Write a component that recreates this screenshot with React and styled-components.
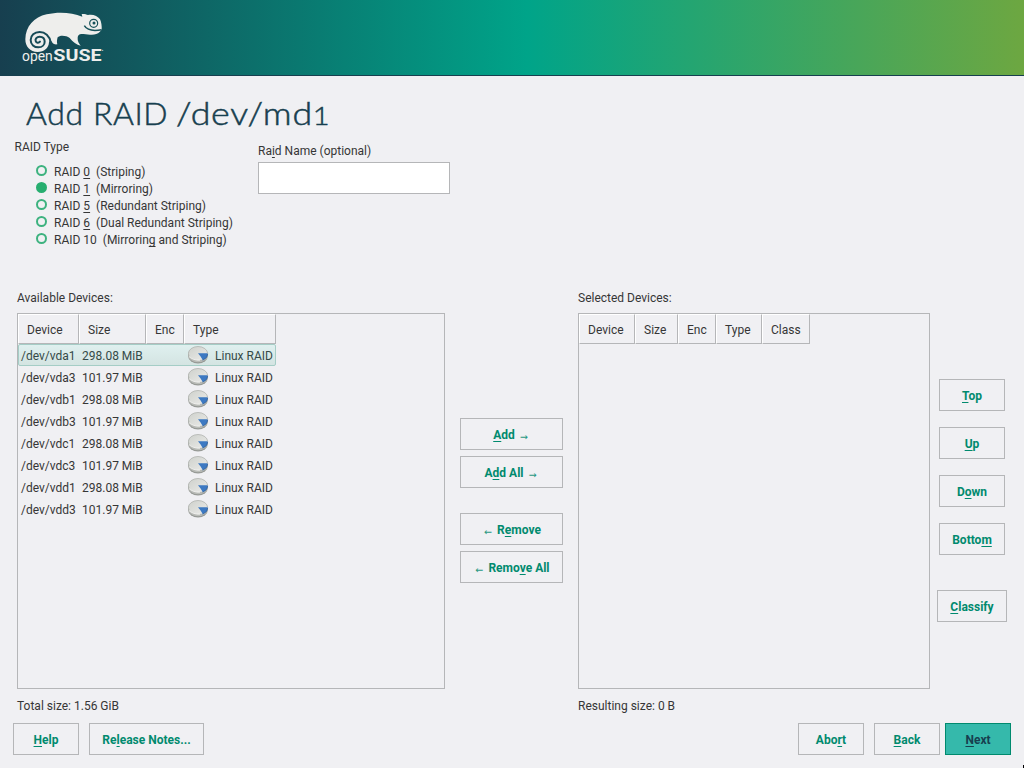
import React from "react";
import styled, { createGlobalStyle, css } from "styled-components";

const GlobalStyle = createGlobalStyle`
  * { box-sizing: border-box; }
  body {
    margin: 0;
    background: #f0f0f3;
    color: #363636;
    font: 12px/16px Roboto, sans-serif;
    overflow: hidden;
  }
  button, input { font: inherit; border-radius: 0; }
`;

const Page = styled.div`
  position: relative;
  display: flex;
  flex-direction: column;
  width: 1024px;
  height: 768px;
  overflow: hidden;
`;

const Banner = styled.header`
  flex: none;
  height: 76px;
  padding: 10px 0 0 20px;
  background: linear-gradient(90deg, #173f4f 0%, #00a489 51.5%, #6da741 100%);
  border-bottom: 1px solid #173f4f;
`;

const Title = styled.h1`
  display: flex;
  gap: 12px;
  flex: none;
  height: 56px;
  margin: 0;
  padding-left: 26px;
  font: 300 31px/74px Lato, sans-serif;
  letter-spacing: 0.6px;
  color: #173f4f;
  -webkit-text-stroke: 0.5px #173f4f;
  white-space: nowrap;
`;

const TitlePart = styled.span`
  transform: scaleX(${(p) => p.$stretch});
  transform-origin: 0 0;
`;

const LowFigure = styled.span`
  font-size: 25px;
`;

const Options = styled.section`
  display: flex;
  flex: none;
  height: 158px;
  padding-left: 14px;
`;

const RaidTypes = styled.div`
  width: 244px;
  padding-top: 7px;
`;

const GroupTitle = styled.div`
  padding-left: 0.5px;
`;

const RadioList = styled.div`
  padding: 9px 0 0 22px;
`;

const RadioRow = styled.label`
  display: flex;
  gap: 7px;
  height: 17px;
  line-height: 17px;
  white-space: pre;
`;

const Dot = styled.span`
  width: 11px;
  height: 11px;
  margin-top: 1px;
  border: 2px solid #3db27f;
  border-radius: 50%;
  background: ${(p) => (p.$on ? "#27ae70" : "transparent")};
  ${(p) => p.$on && css`border-color: #27ae70;`}
`;

const NameField = styled.label`
  display: flex;
  flex-direction: column;
  gap: 3px;
  padding-top: 11px;
`;

const NameInput = styled.input`
  width: 192px;
  height: 32px;
  border: 1px solid #b5b6b8;
  background: #fff;
  outline: none;
`;

const Key = styled.span`
  text-decoration: underline;
  text-decoration-thickness: 1px;
  text-underline-offset: 2px;
  text-decoration-skip-ink: none;
`;

const Selector = styled.section`
  display: flex;
  flex: none;
  height: 425px;
  padding-left: 17px;
`;

const Panel = styled.div`
  display: flex;
  flex-direction: column;
  width: ${(p) => p.$width}px;
`;

const PanelLabel = styled.div`
  height: 23px;
`;

const PanelTotal = styled.div`
  padding-top: 9px;
`;

const Table = styled.div`
  height: 376px;
  border: 1px solid #b5b6b8;
`;

const HeadRow = styled.div`
  display: flex;
  height: 30px;
`;

const HeadCell = styled.div`
  width: ${(p) => p.$width}px;
  padding-left: 8px;
  line-height: 30px;
  border: solid;
  border-width: 1px;
  border-color: #fff #b5b6b8 #b5b6b8 #fff;
`;

const DeviceRow = styled.div`
  display: grid;
  grid-template-columns: 61px 106px 27px 1fr;
  width: 258px;
  height: 22px;
  padding-left: 2px;
  line-height: 22px;
  border: 1px solid transparent;
  white-space: nowrap;
  ${(p) =>
    p.$selected &&
    css`
      color: #354a48;
      border-color: #a5cdc6;
      border-radius: 2px;
      background: linear-gradient(#dff0ef, #d4e4e2);
    `}
`;

const Transfer = styled.div`
  display: flex;
  flex-direction: column;
  gap: 6px;
  width: 133px;
  padding: 128px 15px 0;
`;

const Order = styled.div`
  display: flex;
  flex-direction: column;
  align-items: center;
  gap: 16px;
  width: 84px;
  padding-top: 89px;
`;

const Button = styled.button`
  flex: none;
  width: ${(p) => p.$width}px;
  height: 32px;
  margin-top: ${(p) => p.$gap || 0}px;
  padding: 2px 0 0;
  border: 1px solid ${(p) => (p.$primary ? "#008a6e" : "#b5b6b8")};
  background: ${(p) => (p.$primary ? "#35b9ab" : "transparent")};
  color: ${(p) => (p.$primary ? "#173f4f" : "#008a6e")};
  font-weight: 700;
  line-height: 16px;
  white-space: pre;
`;

const Arrow = styled.span`
  display: inline-block;
  width: 12px;
  height: 10px;
  font: 400 9.5px/10px "DejaVu Sans", sans-serif;
  text-align: center;
  vertical-align: -1px;
  opacity: 0.85;
`;

const Footer = styled.footer`
  display: flex;
  gap: 10px;
  padding: 8px 13px 0;
`;

const Spacer = styled.div`
  flex: 1;
`;

const NextSlot = styled.div`
  margin-left: -5px;
`;

const PointerTip = styled.div`
  position: absolute;
  right: 0;
  bottom: 0;
  width: 1px;
  height: 3px;
  background: #000;
`;

const LogoDrawing = styled.svg`
  display: block;
`;

const Logo = () => (
  <LogoDrawing width="90" height="58" viewBox="60 30 270 174" aria-label="openSUSE">
    <path
      fill="#eeeeec"
      d="M147 127 C146 145 132 156 113 156 C90 156 76 140 76 118 C77 79 102 51 140 43 C178 34 216 38 247 50 L245 42 C252 41 259 43 264 45 C278 42 293 47 300 58 C304 66 306 80 305 89 L299 96 C292 103 282 105 270 104 C260 104 249 101 243 102 C235 103 233 109 233 114 C232 123 237 131 242 137 C230 135 218 126 209 114 C199 106 179 105 173 112 C171 119 170 126 172 133 C164 134 158 131 156 126 L151 119 Z"
    />
    <path
      fill="none"
      stroke="#174b57"
      strokeWidth="6"
      strokeLinecap="round"
      d="M152 127 C149 107 135 96 119 96 C103 96 92 106 92 120 C92 134 103 142 115 142 C127 142 134 134 134 125 C134 115 127 110 119 110 C110 110 105 117 107 123 C109 129 116 130 120 125"
    />
    <g fill="none" stroke="#155159">
      <circle cx="281" cy="70" r="12" strokeWidth="3.5" />
      <path strokeWidth="4.5" d="M253 77 C261 90 279 94 305 89" />
    </g>
    <circle cx="282" cy="69" r="4.5" fill="#155159" />
    <text x="66" y="184" fill="#eeeeec" fontFamily="Roboto, sans-serif" fontSize="43" textLength="92" lengthAdjust="spacingAndGlyphs">open</text>
    <text x="160" y="184" fill="#eeeeec" fontFamily="Roboto, sans-serif" fontWeight="700" fontSize="52" textLength="145" lengthAdjust="spacingAndGlyphs">SUSE</text>
    <circle cx="308" cy="151" r="2" fill="#b8caca" />
  </LogoDrawing>
);

const DiskIcon = () => (
  <svg width="22" height="20" viewBox="0 0 22 20">
    <defs>
      <linearGradient id="diskFace" x1="0" y1="0" x2="1" y2="1">
        <stop offset="0" stopColor="#ced1cc" />
        <stop offset="1" stopColor="#ececea" />
      </linearGradient>
    </defs>
    <ellipse cx="10" cy="10.8" rx="9.9" ry="7.7" fill="#979a96" />
    <ellipse cx="10" cy="9.8" rx="9.9" ry="7.4" fill="#bbbdb9" />
    <ellipse cx="10" cy="8.6" rx="9.6" ry="7.1" fill="url(#diskFace)" stroke="#a9aca8" strokeWidth=".7" />
    <path d="M1 11.5 Q5 15.5 12 15.2" fill="none" stroke="#f4f4f2" strokeWidth=".9" />
    <path d="M10 8.2 L19.5 8.2 Q20.4 12.4 14.7 15 L12.6 11.6 Z" fill="#3d79c2" />
    <path d="M14.7 15.2 Q19.8 13 19.7 9" fill="none" stroke="#2d5f9e" strokeWidth=".8" />
  </svg>
);

const raidLevels = [
  ["RAID ", "0", "  (Striping)"],
  ["RAID ", "1", "  (Mirroring)"],
  ["RAID ", "5", "  (Redundant Striping)"],
  ["RAID ", "6", "  (Dual Redundant Striping)"],
  ["RAID 10  (Mirrorin", "g", " and Striping)"],
];

const devices = ["a1", "a3", "b1", "b3", "c1", "c3", "d1", "d3"];

const Mnemonic = ({ parts }) => (
  <span>
    {parts[0]}
    <Key>{parts[1]}</Key>
    {parts[2]}
  </span>
);

const Head = ({ columns }) => (
  <HeadRow>
    {columns.map(([name, width]) => (
      <HeadCell key={name} $width={width}>{name}</HeadCell>
    ))}
  </HeadRow>
);

export default function App() {
  return (
    <Page>
      <GlobalStyle />
      <Banner><Logo /></Banner>
      <Title>
        <TitlePart $stretch={1.03}>Add RAID</TitlePart>{" "}
        <TitlePart $stretch={1.155}>/dev/md<LowFigure>1</LowFigure></TitlePart>
      </Title>
      <Options>
        <RaidTypes>
          <GroupTitle>RAID Type</GroupTitle>
          <RadioList>
            {raidLevels.map((parts, i) => (
              <RadioRow key={i}>
                <Dot $on={i === 1} />
                <Mnemonic parts={parts} />
              </RadioRow>
            ))}
          </RadioList>
        </RaidTypes>
        <NameField>
          <Mnemonic parts={["Ra", "i", "d Name (optional)"]} />
          <NameInput />
        </NameField>
      </Options>
      <Selector>
        <Panel $width={428}>
          <PanelLabel>Available Devices:</PanelLabel>
          <Table>
            <Head columns={[["Device", 61], ["Size", 67], ["Enc", 38], ["Type", 92]]} />
            {devices.map((d, i) => (
              <DeviceRow key={d} $selected={i === 0}>
                <span>/dev/vd{d}</span>
                <span>{i % 2 ? "101.97 MiB" : "298.08 MiB"}</span>
                <DiskIcon />
                <span>Linux RAID</span>
              </DeviceRow>
            ))}
          </Table>
          <PanelTotal>Total size: 1.56 GiB</PanelTotal>
        </Panel>
        <Transfer>
          <Button $width={103}><Key>A</Key>dd <Arrow>→</Arrow></Button>
          <Button $width={103}>A<Key>d</Key>d All <Arrow>→</Arrow></Button>
          <Button $width={103} $gap={19}><Arrow>←</Arrow> R<Key>e</Key>move</Button>
          <Button $width={103}><Arrow>←</Arrow> Remo<Key>v</Key>e All</Button>
        </Transfer>
        <Panel $width={352}>
          <PanelLabel>Selected Devices:</PanelLabel>
          <Table>
            <Head columns={[["Device", 56], ["Size", 43], ["Enc", 38], ["Type", 46], ["Class", 48]]} />
          </Table>
          <PanelTotal>Resulting size: 0 B</PanelTotal>
        </Panel>
        <Order>
          <Button $width={66}><Key>T</Key>op</Button>
          <Button $width={66}><Key>U</Key>p</Button>
          <Button $width={66}>D<Key>o</Key>wn</Button>
          <Button $width={66}>Botto<Key>m</Key></Button>
          <Button $width={70} $gap={19}><Key>C</Key>lassify</Button>
        </Order>
      </Selector>
      <Footer>
        <Button $width={66}><Key>H</Key>elp</Button>
        <Button $width={115}>Re<Key>l</Key>ease Notes...</Button>
        <Spacer />
        <Button $width={66}>Abo<Key>r</Key>t</Button>
        <Button $width={66}><Key>B</Key>ack</Button>
        <NextSlot><Button $width={66} $primary><Key>N</Key>ext</Button></NextSlot>
      </Footer>
      <PointerTip />
    </Page>
  );
}
